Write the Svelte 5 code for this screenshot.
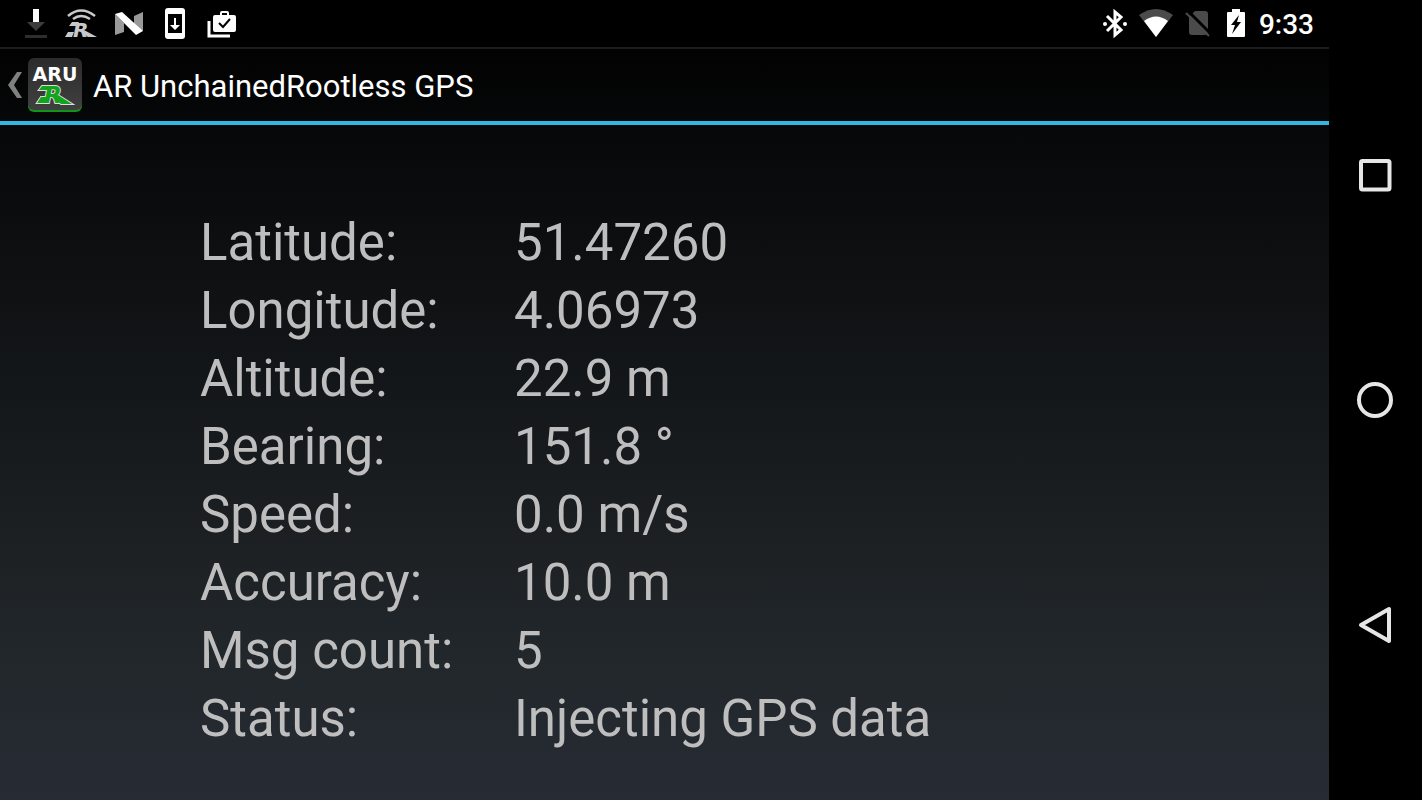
<script>
    let time = '9:33';

    let fields = [
        { label: 'Latitude:', value: '51.47260' },
        { label: 'Longitude:', value: '4.06973' },
        { label: 'Altitude:', value: '22.9 m' },
        { label: 'Bearing:', value: '151.8 °' },
        { label: 'Speed:', value: '0.0 m/s' },
        { label: 'Accuracy:', value: '10.0 m' },
        { label: 'Msg count:', value: '5' },
        { label: 'Status:', value: 'Injecting GPS data' }
    ];
</script>

<div class="device">
    <div class="screen">
        <div class="status_bar">
            <div class="notifications">
                <!-- download -->
                <svg width="24" height="32" viewBox="0 0 24 32">
                    <path d="M9 1h6v14H9z" fill="#fff" />
                    <path d="M3 14h18l-9 9z" fill="#3c3c3c" />
                    <path d="M1 27h22v3H1z" fill="#2e2e2e" />
                </svg>
                <!-- gps service -->
                <svg width="34" height="32" viewBox="0 0 34 32">
                    <path d="M4 8Q17-3 31 8M9 11Q17 5 26 11" fill="none" stroke="#c8c8c8" stroke-width="2.5" />
                    <path d="M8 14h7l-2 4H5zM1 29l3-5h6l-2 5zM20 22l13 7h-9l-8-6z" fill="#c8c8c8" />
                    <text class="logo_r" x="9" y="29" font-size="20" fill="#c8c8c8">R</text>
                </svg>
                <!-- nougat -->
                <svg width="32" height="32" viewBox="0 0 32 32">
                    <path d="M1 6l9 9v9l-9 3zM29 4v19l-9-4V8z" fill="#999" />
                    <path d="M1 6l7-2 21 19-7 4z" fill="#fff" />
                </svg>
                <!-- system update -->
                <svg width="26" height="32" viewBox="0 0 26 32">
                    <rect x="3" y="0" width="20" height="31" rx="3" fill="#fff" />
                    <path d="M6 6h14v19H6z" fill="#000" />
                    <path d="M12 10h2v7h4l-5 5-5-5h4z" fill="#fff" />
                </svg>
                <!-- apps installed -->
                <svg width="34" height="32" viewBox="-3 0 34 32">
                    <path d="M2 13v15h21" fill="none" stroke="#fff" stroke-width="3" />
                    <path d="M8 7h5V5q0-2 2-2h5q2 0 2 2v2h5q2 0 2 2v13q0 2-2 2H8q-2 0-2-2V9q0-2 2-2zm7 0h5V5h-5z" fill="#fff" fill-rule="evenodd" />
                    <path d="M12 15l4 4 7-8" fill="none" stroke="#000" stroke-width="2" />
                </svg>
            </div>
            <div class="system">
                <svg width="24" height="32" viewBox="0 0 24 32">
                    <path d="M4 8l14 14-6 5V4l6 5L4 23" fill="none" stroke="#fff" stroke-width="3" />
                    <circle cx="2" cy="16" r="2" fill="#fff" />
                    <circle cx="22" cy="16" r="2" fill="#fff" />
                </svg>
                <svg width="34" height="32" viewBox="0 0 34 32">
                    <path d="M0 7Q17-5 34 7L17 29z" fill="#4b4b4b" />
                    <path d="M5 13Q17 4 29 13L17 29z" fill="#fff" />
                </svg>
                <svg width="26" height="32" viewBox="0 0 26 32">
                    <path d="M10 3h10q3 0 3 3v18q0 3-3 3H7q-3 0-3-3V9z" fill="#4b4b4b" />
                    <path d="M3 3l24 24" stroke="#000" stroke-width="3" />
                    <path d="M1 5l23 23" stroke="#4b4b4b" stroke-width="2" />
                </svg>
                <svg class="battery" width="18" height="32" viewBox="0 0 18 32">
                    <path d="M5 1h8v3h4q1 0 1 1v23q0 1-1 1H1q-1 0-1-1V5q0-1 1-1h4z" fill="#fff" />
                    <path d="M12 7l-8 10h4l-3 9 9-12h-4z" fill="#000" />
                </svg>
                <span class="clock">{time}</span>
            </div>
        </div>

        <header>
            <a href="/" aria-label="Navigate up">
                <svg class="chevron" width="14" height="28" viewBox="0 0 14 28">
                    <path d="M9 1h5L6 14l8 13H9L0 14z" fill="#808080" />
                </svg>
                <svg width="56" height="56" viewBox="0 0 56 56">
                    <defs>
                        <linearGradient id="tile" x1="0" y1="0" x2="0" y2="1">
                            <stop offset="0" stop-color="#2b2b2b" />
                            <stop offset="1" stop-color="#404040" />
                        </linearGradient>
                    </defs>
                    <rect x="1" y="3" width="54" height="52" rx="6" fill="#11941a" />
                    <rect x="1" y="1" width="54" height="52" rx="6" fill="url(#tile)" />
                    <text class="logo_name" x="28" y="24" text-anchor="middle">ARU</text>
                    <path d="M15 29h10l-2 4H12zM10 46l4-6h9l-3 6zM31 38l14 9H34l-9-8z" fill="none" stroke="#ddd" stroke-width="2" />
                    <text class="logo_r" x="17" y="46" font-size="23" fill="#12a51c" stroke="#ddd" stroke-width="2">R</text>
                    <path d="M15 29h10l-2 4H12zM10 46l4-6h9l-3 6zM31 38l14 9H34l-9-8z" fill="#12a51c" />
                </svg>
            </a>
            <h1>AR UnchainedRootless GPS</h1>
        </header>

        <main>
            <table>
                <tbody>
                    {#each fields as { label, value }}
                        <tr>
                            <th scope="row">{label}</th>
                            <td>{value}</td>
                        </tr>
                    {/each}
                </tbody>
            </table>
        </main>
    </div>

    <nav>
        <button aria-label="Recent apps">
            <svg width="40" height="40" viewBox="0 0 40 40">
                <rect x="6" y="6" width="28.5" height="28.5" rx="1.5" />
            </svg>
        </button>
        <button aria-label="Home">
            <svg width="40" height="40" viewBox="0 0 40 40">
                <circle cx="20" cy="20" r="16" />
            </svg>
        </button>
        <button aria-label="Back">
            <svg width="40" height="40" viewBox="0 0 40 40">
                <path d="M34 4v32L6 20z" stroke-linejoin="round" />
            </svg>
        </button>
    </nav>
</div>

<style>
    :global(body) {
        margin: 0;
        background: #000;
    }

    .device {
        min-height: 100vh;

        display: grid;
        grid-template-columns: 1fr 93px;

        font-family: Roboto, sans-serif;
    }

    .screen {
        display: flex;
        flex-direction: column;

        background: linear-gradient(#000, #22272b 82%, #272b34);
    }

    .status_bar {
        height: 46px;
        padding: 1px 15px 0 24px;

        display: flex;
        justify-content: space-between;
        align-items: center;

        border-bottom: 2px solid #1c1c1c;
        background: #000;
    }

    .status_bar svg {
        overflow: visible;
    }

    .notifications, .system {
        display: flex;
        align-items: center;
    }

    .notifications {
        gap: 16px;
    }

    .system {
        gap: 12px;
    }

    .battery {
        margin: 0 2px 0 4px;
    }

    .clock {
        padding-top: 2px;

        color: #fff;
        font-size: 28px;
        font-weight: 500;
        line-height: 32px;
    }

    header {
        height: 72px;
        padding-left: 8px;

        display: flex;
        align-items: center;
        gap: 10px;

        border-bottom: 4px solid #33b5e5;
        background: linear-gradient(#020202, #060708);
    }

    header a {
        display: flex;
        align-items: center;
        gap: 5px;
    }

    h1 {
        margin: 0;
        padding-top: 4px;

        color: #fff;
        font-size: 31px;
        font-weight: 400;
        line-height: 40px;
    }

    .logo_r {
        font-family: "DejaVu Sans", sans-serif;
        font-style: italic;
        font-weight: 700;
        paint-order: stroke;
    }

    .logo_name {
        fill: #fff;
        font-family: "DejaVu Sans", sans-serif;
        font-size: 19px;
        font-weight: 700;
    }

    main {
        padding: 84px 0 40px 200px;
    }

    table {
        border-collapse: collapse;

        color: #bebebe;
        font-size: 51px;
        line-height: 68px;
        text-align: left;
    }

    th, td {
        padding: 0;

        font-weight: 400;
        white-space: nowrap;
    }

    th {
        width: 314px;
    }

    nav {
        padding-right: 2px;

        display: flex;
        flex-direction: column;
        justify-content: space-evenly;

        background: #000;
    }

    nav button {
        height: 100px;
        padding: 0;

        display: flex;
        justify-content: center;
        align-items: center;

        border: none;
        background: transparent;
    }

    nav svg {
        fill: none;
        stroke: #e6e6e6;
        stroke-width: 4;
    }
</style>
